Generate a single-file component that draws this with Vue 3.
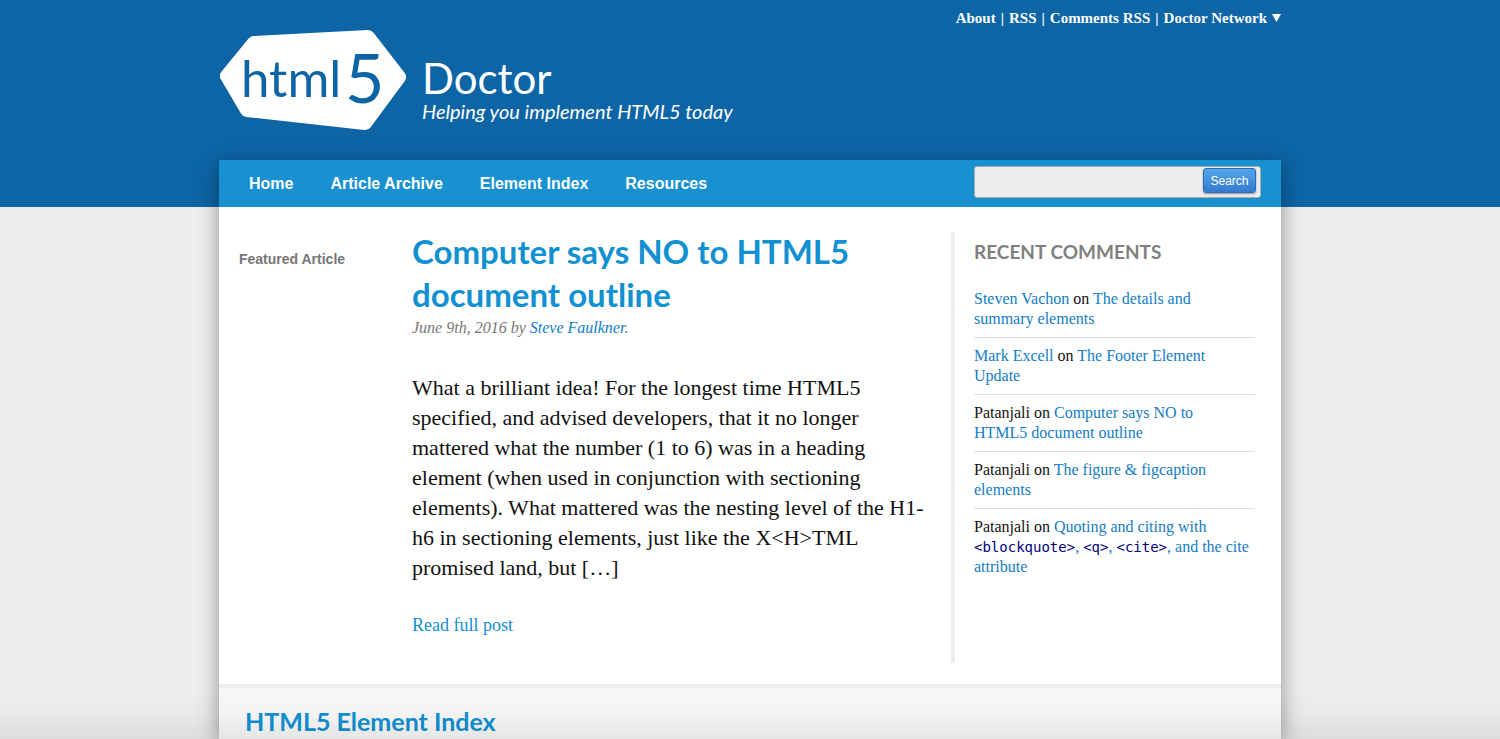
<script setup>
const topLinks = ['About', 'RSS', 'Comments RSS']

const navItems = ['Home', 'Article Archive', 'Element Index', 'Resources']

const comments = [
  { author: 'Steven Vachon', linked: true, title: [{ text: 'The details and' }, { br: true }, { text: 'summary elements' }] },
  { author: 'Mark Excell', linked: true, title: [{ text: 'The Footer Element' }, { br: true }, { text: 'Update' }] },
  { author: 'Patanjali', title: [{ text: 'Computer says NO to' }, { br: true }, { text: 'HTML5 document outline' }] },
  { author: 'Patanjali', title: [{ text: 'The figure & figcaption' }, { br: true }, { text: 'elements' }] },
  {
    author: 'Patanjali',
    title: [
      { text: 'Quoting and citing with' },
      { br: true },
      { code: '<blockquote>' },
      { text: ', ' },
      { code: '<q>' },
      { text: ', ' },
      { code: '<cite>' },
      { text: ', and the cite' },
      { br: true },
      { text: 'attribute' },
    ],
  },
]
</script>

<template>
  <div class="site">
    <header class="masthead">
      <div class="container masthead-inner">
        <a class="brand" href="#">
          <svg class="badge" viewBox="0 0 188 102" role="img" aria-label="html5">
            <polygon points="8,47 35,14 149,8 180,48 146,94 28,81" />
            <text class="badge-word" x="22" y="68">html</text>
            <text class="badge-five" x="126" y="74">5</text>
          </svg>
          <span class="brand-text">
            <span class="brand-name">Doctor</span>
            <span class="tagline">Helping you implement HTML5 today</span>
          </span>
        </a>
        <nav class="top-links" aria-label="Site">
          <template v-for="link in topLinks" :key="link">
            <a href="#">{{ link }}</a><span class="bar">|</span>
          </template>
          <a href="#">Doctor Network</a>
          <svg class="caret" viewBox="0 0 9 8" aria-hidden="true"><path d="M0 0h9L4.500 8z" /></svg>
        </nav>
      </div>
    </header>

    <div class="container page">
      <div class="navbar">
        <nav class="menu" aria-label="Main">
          <a v-for="item in navItems" :key="item" href="#">{{ item }}</a>
        </nav>
        <form class="search" role="search" @submit.prevent>
          <input type="search" aria-label="Search the site" />
          <button type="submit">Search</button>
        </form>
      </div>

      <main class="columns">
        <p class="kicker">Featured Article</p>
        <article class="post">
          <h1><a href="#">Computer says NO to HTML5 <br />document outline</a></h1>
          <p class="byline">June 9th, 2016 by <a href="#">Steve Faulkner</a>.</p>
          <p class="excerpt">
            What a brilliant idea! For the longest time HTML5<br />
            specified, and advised developers, that it no longer<br />
            mattered what the number (1 to 6) was in a heading<br />
            element (when used in conjunction with sectioning<br />
            elements). What mattered was the nesting level of the H1-<br />
            h6 in sectioning elements, just like the X&lt;H&gt;TML<br />
            promised land, but […]
          </p>
          <a class="more" href="#">Read full post</a>
        </article>
        <aside class="recent">
          <h2>RECENT COMMENTS</h2>
          <ul>
            <li v-for="(c, i) in comments" :key="i">
              <a v-if="c.linked" href="#">{{ c.author }}</a><template v-else>{{ c.author }}</template>
              on
              <a href="#"><template v-for="(part, j) in c.title" :key="j"><br v-if="part.br" /><code v-else-if="part.code">{{ part.code }}</code><template v-else>{{ part.text }}</template></template></a>
            </li>
          </ul>
        </aside>
      </main>

      <section class="index">
        <h2>HTML5 Element Index</h2>
      </section>
    </div>
    <div class="fade" aria-hidden="true"></div>
  </div>
</template>

<style>
html,
body,
#app {
  height: 100%;
}
body {
  background: #eee;
}
</style>

<style scoped>
.site {
  display: flex;
  flex-direction: column;
  min-height: 100%;
  overflow: hidden;
  background: linear-gradient(#0d65a6 207px, #eee 207px);
  font-family: "Liberation Serif", serif;
  color: #111;
}
a {
  color: #137dc5;
  text-decoration: none;
}
h1,
h2,
p,
ul {
  margin: 0;
  padding: 0;
  list-style: none;
}
.container {
  box-sizing: border-box;
  width: 100%;
  max-width: 1062px;
  margin: 0 auto;
}
.masthead-inner {
  display: flex;
  justify-content: space-between;
  align-items: flex-start;
  height: 160px;
}
.brand {
  display: flex;
  gap: 15px;
  margin-top: 29px;
  color: #fff;
  font-family: Lato, sans-serif;
}
.badge {
  width: 188px;
  height: 102px;
}
.badge polygon {
  fill: #fff;
  stroke: #fff;
  stroke-width: 14px;
  stroke-linejoin: round;
}
.badge text {
  fill: #0d65a6;
}
.badge-word {
  font-size: 51px;
}
.badge-five {
  font-size: 68px;
}
.brand-text {
  display: flex;
  flex-direction: column;
  padding-top: 26px;
}
.brand-name {
  font-size: 42px;
  line-height: 46px;
}
.tagline {
  font-size: 20px;
  font-style: italic;
  line-height: 20px;
}
.top-links {
  display: flex;
  align-items: center;
  gap: 5px;
  height: 36px;
  font-size: 15px;
  font-weight: 700;
  color: #fff;
}
.top-links a {
  color: #fff;
}
.caret {
  width: 9px;
  height: 8px;
  fill: #fff;
}
.page {
  display: flex;
  flex-direction: column;
  flex: 1;
  background: #fff;
  box-shadow: 0 5px 20px rgba(0, 0, 0, 0.4);
}
.navbar {
  display: flex;
  justify-content: space-between;
  align-items: center;
  height: 47px;
  padding: 0 20px 0 30px;
  background: #1991d1;
}
.menu {
  display: flex;
  gap: 37px;
  font: 700 16px/20px "Liberation Sans", sans-serif;
}
.menu a {
  color: #fff;
}
.search {
  box-sizing: border-box;
  display: flex;
  align-items: flex-start;
  width: 287px;
  height: 32px;
  margin-bottom: 3px;
  padding: 1px 4px;
  border: 1px solid #aaa;
  border-radius: 3px;
  background: #ededed;
}
.search input {
  flex: 1;
  min-width: 0;
  height: 28px;
  border: 0;
  outline: 0;
  background: transparent;
}
.search button {
  width: 53px;
  height: 25px;
  padding: 0;
  border: 1px solid #2a69bd;
  border-radius: 3px;
  background: linear-gradient(#55a5e5, #347bd0);
  box-shadow: 0 1px 2px rgba(0, 0, 0, 0.4);
  color: #fff;
  font: 400 12px/20px "Liberation Sans", sans-serif;
}
.columns {
  display: grid;
  grid-template-columns: 173px 1fr 304px;
  padding: 23px 26px 21px 20px;
  border-bottom: 4px solid #eee;
}
.kicker {
  padding-top: 19px;
  color: #777;
  font: 700 14px/20px "Liberation Sans", sans-serif;
}
.post h1 {
  padding-bottom: 4px;
  font: 700 33px/43px Lato, sans-serif;
}
.post h1 a {
  color: #1190d2;
}
.byline {
  color: #777;
  font-size: 16px;
  font-style: italic;
  line-height: 16px;
}
.excerpt {
  margin-top: 37px;
  font-size: 22px;
  line-height: 30px;
  white-space: nowrap;
}
.more {
  display: inline-block;
  margin-top: 32px;
  color: #1190d2;
  font-size: 18px;
  line-height: 20px;
}
.recent {
  min-height: 431px;
  box-sizing: border-box;
  margin-top: 2px;
  padding-left: 19px;
  border-left: 4px solid #eee;
}
.recent h2 {
  color: #808080;
  font: 700 19px/40px Lato, sans-serif;
}
.recent ul {
  margin-top: 9px;
}
.recent li {
  padding: 8px 0;
  border-bottom: 1px solid #ddd;
  font-size: 16px;
  line-height: 20px;
}
.recent li:last-child {
  border-bottom: 0;
}
.recent code {
  color: #000080;
  font-family: "DejaVu Sans Mono", monospace;
  font-size: 14px;
}
.index {
  flex: 1;
  padding: 16px 26px 0;
  background: #f8f8f8;
}
.index h2 {
  color: #1190d2;
  font: 700 25px/35px Lato, sans-serif;
}
.fade {
  position: fixed;
  right: 0;
  bottom: 0;
  left: 0;
  height: 50px;
  background: linear-gradient(rgba(0, 0, 0, 0), rgba(0, 0, 0, 0.02) 50%, rgba(0, 0, 0, 0.07));
  pointer-events: none;
}
</style>
